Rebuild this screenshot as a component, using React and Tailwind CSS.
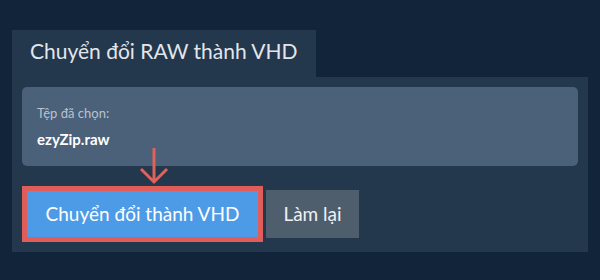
export default function App() {
  return (
    <div className="w-[600px] h-[280px] bg-[#12243a] pt-[30px] px-[12px] font-['Lato',sans-serif]">
      {/* tab */}
      <div className="inline-block h-[47px] px-[18px] bg-[#23374d] text-[21px] leading-[42px] text-[#e2e6ea]">
        Chuyển đổi RAW thành VHD
      </div>

      {/* panel */}
      <div className="relative bg-[#23374d] p-[10px] pb-[14px]">
        <div className="rounded-[5px] bg-[#4b6079] px-[15px] pt-[17px] pb-[14px] h-[79px]">
          <p className="text-[13px] leading-[18px] text-[#b9c3ce]">Tệp đã chọn:</p>
          <p className="mt-[6px] text-[15px] leading-[22px] font-bold text-white">ezyZip.raw</p>
        </div>

        <div className="mt-[24px] ml-[5px] flex items-center gap-[8px] h-[48px]">
          <button className="h-[46px] w-[231px] bg-[#4d9be6] ring-[5px] ring-[#e05d59] text-[19px] text-white">
            Chuyển đổi thành VHD
          </button>
          <button className="h-[48px] w-[93px] bg-[#4f5e6d] text-[19px] text-[#eef1f4]">
            Làm lại
          </button>
        </div>

        {/* arrow pointing at convert button */}
        <svg
          className="absolute left-[118px] top-[70px]"
          width="48"
          height="40"
          viewBox="0 0 48 40"
          fill="none"
          stroke="#e0625a"
          strokeWidth="3"
        >
          <path d="M24 1 V35" />
          <path d="M11 22 L24 35 L37 22" />
        </svg>
      </div>
    </div>
  );
}
